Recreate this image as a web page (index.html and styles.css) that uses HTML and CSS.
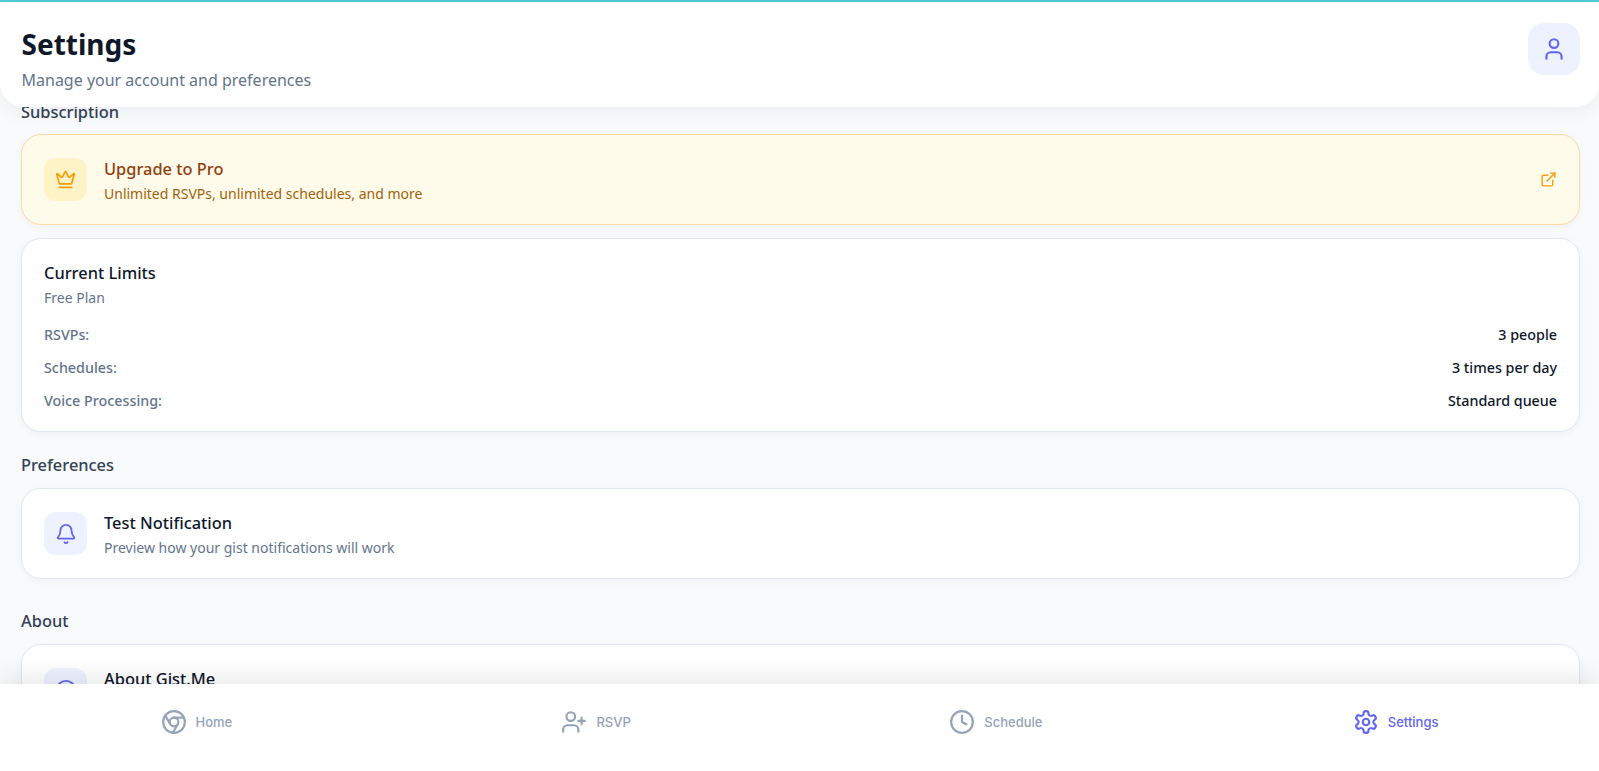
FILE: index.html
```html
<!DOCTYPE html>
<html lang="en">
<head>
<meta charset="utf-8">
<title>Settings</title>
<link rel="stylesheet" href="styles.css">
</head>
<body>
<div class="app">
  <header class="header">
    <div>
      <h1 class="title">Settings</h1>
      <p class="subtitle">Manage your account and preferences</p>
    </div>
    <button class="avatar" aria-label="Profile">
      <svg width="26" height="26" viewBox="0 0 24 24" class="stroke"><path d="M19 21v-2a4 4 0 0 0-4-4H9a4 4 0 0 0-4 4v2"/><circle cx="12" cy="7" r="4"/></svg>
    </button>
  </header>
  <main class="main">
    <h2 class="section-title">Subscription</h2>
    <section class="card card-pro row">
      <div class="icon-box icon-pro">
        <svg width="21" height="21" viewBox="0 0 24 24" class="stroke"><path d="M11.56 3.27a.5.5 0 0 1 .88 0l2.95 5.61a1 1 0 0 0 1.52.29l4.28-3.66a.5.5 0 0 1 .8.52l-2.83 10.25a1 1 0 0 1-.96.72H5.8a1 1 0 0 1-.96-.72L2.01 6.03a.5.5 0 0 1 .8-.52l4.28 3.66a1 1 0 0 0 1.52-.29z"/><path d="M5 21h14"/></svg>
      </div>
      <div class="row-text">
        <div class="row-title pro-title">Upgrade to Pro</div>
        <div class="row-sub pro-sub">Unlimited RSVPs, unlimited schedules, and more</div>
      </div>
      <svg class="stroke ext" width="17" height="17" viewBox="0 0 24 24"><path d="M15 3h6v6"/><path d="M10 14 21 3"/><path d="M18 13v6a2 2 0 0 1-2 2H5a2 2 0 0 1-2-2V8a2 2 0 0 1 2-2h6"/></svg>
    </section>
    <section class="card limits">
      <div class="row-title">Current Limits</div>
      <div class="row-sub plan">Free Plan</div>
      <div class="limit"><span>RSVPs:</span><strong>3 people</strong></div>
      <div class="limit"><span>Schedules:</span><strong>3 times per day</strong></div>
      <div class="limit"><span>Voice Processing:</span><strong>Standard queue</strong></div>
    </section>
    <h2 class="section-title second">Preferences</h2>
    <section class="card row">
      <div class="icon-box">
        <svg width="22" height="22" viewBox="0 0 24 24" class="stroke"><path d="M10.27 21a2 2 0 0 0 3.46 0"/><path d="M3.26 15.33A1 1 0 0 0 4 17h16a1 1 0 0 0 .74-1.67C19.41 13.96 18 12.5 18 8A6 6 0 0 0 6 8c0 4.5-1.41 5.96-2.74 7.33"/></svg>
      </div>
      <div class="row-text">
        <div class="row-title">Test Notification</div>
        <div class="row-sub">Preview how your gist notifications will work</div>
      </div>
    </section>
    <h2 class="section-title third">About</h2>
    <section class="card row">
      <div class="icon-box">
        <svg width="22" height="22" viewBox="0 0 24 24" class="stroke"><circle cx="12" cy="12" r="10"/><path d="M12 16v-4"/><path d="M12 8h.01"/></svg>
      </div>
      <div class="row-text solo">
        <div class="row-title">About Gist.Me</div>
      </div>
    </section>
  </main>
  <nav class="nav">
    <a class="nav-item">
      <svg width="26" height="26" viewBox="0 0 24 24" class="stroke"><circle cx="12" cy="12" r="10"/><circle cx="12" cy="12" r="4"/><path d="M21.17 8H12"/><path d="M3.95 6.06 8.54 14"/><path d="M10.88 21.94 15.46 14"/></svg>
      <span>Home</span>
    </a>
    <a class="nav-item">
      <svg width="26" height="26" viewBox="0 0 24 24" class="stroke"><path d="M16 21v-2a4 4 0 0 0-4-4H6a4 4 0 0 0-4 4v2"/><circle cx="9" cy="7" r="4"/><path d="M19 8v6"/><path d="M22 11h-6"/></svg>
      <span>RSVP</span>
    </a>
    <a class="nav-item">
      <svg width="26" height="26" viewBox="0 0 24 24" class="stroke"><circle cx="12" cy="12" r="10"/><path d="M12 6v6l4 2"/></svg>
      <span>Schedule</span>
    </a>
    <a class="nav-item active">
      <svg width="26" height="26" viewBox="0 0 24 24" class="stroke"><path d="M12.22 2h-.44a2 2 0 0 0-2 2v.18a2 2 0 0 1-1 1.73l-.43.25a2 2 0 0 1-2 0l-.15-.08a2 2 0 0 0-2.73.73l-.22.38a2 2 0 0 0 .73 2.73l.15.1a2 2 0 0 1 1 1.72v.51a2 2 0 0 1-1 1.74l-.15.09a2 2 0 0 0-.73 2.73l.22.38a2 2 0 0 0 2.73.73l.15-.08a2 2 0 0 1 2 0l.43.25a2 2 0 0 1 1 1.73V20a2 2 0 0 0 2 2h.44a2 2 0 0 0 2-2v-.18a2 2 0 0 1 1-1.73l.43-.25a2 2 0 0 1 2 0l.15.08a2 2 0 0 0 2.73-.73l.22-.39a2 2 0 0 0-.73-2.73l-.15-.08a2 2 0 0 1-1-1.74v-.5a2 2 0 0 1 1-1.74l.15-.09a2 2 0 0 0 .73-2.73l-.22-.38a2 2 0 0 0-2.73-.73l-.15.08a2 2 0 0 1-2 0l-.43-.25a2 2 0 0 1-1-1.73V4a2 2 0 0 0-2-2z"/><circle cx="12" cy="12" r="3"/></svg>
      <span>Settings</span>
    </a>
  </nav>
</div>
</body>
</html>
```
FILE: styles.css
```css
* { box-sizing: border-box; }
html, body { margin: 0; height: 100%; overflow: hidden; }
body {
  font-family: "Noto Sans", "Open Sans", sans-serif;
  background: #f8fafc;
  color: #0f172a;
}
.stroke {
  fill: none;
  stroke: currentColor;
  stroke-width: 2;
  stroke-linecap: round;
  stroke-linejoin: round;
  flex: none;
}
.app {
  position: relative;
  height: 100vh;
  display: flex;
  flex-direction: column;
  border-top: 2px solid #50cdd5;
}
.header {
  position: absolute;
  top: 0;
  left: 0;
  right: 0;
  z-index: 2;
  height: 105px;
  padding: 21px 19px 0 21.5px;
  display: flex;
  justify-content: space-between;
  align-items: flex-start;
  background: #fff;
  border-radius: 0 0 24px 24px;
  box-shadow: 0 4px 20px rgba(15, 23, 42, 0.06);
}
.title {
  margin: 0;
  font-size: 28px;
  line-height: 42px;
  font-weight: 700;
  color: #0f172a;
}
.subtitle {
  margin: 3px 0 0;
  font-size: 16px;
  line-height: 24px;
  color: #64748b;
}
.avatar {
  width: 52px;
  height: 52px;
  border: 0;
  border-radius: 16px;
  background: #eef2ff;
  color: #6366f1;
  display: flex;
  align-items: center;
  justify-content: center;
  padding: 0;
}
.main {
  flex: 1;
  min-height: 0;
  overflow: hidden;
  padding: 98px 19px 0 21px;
}
.section-title {
  margin: 0 0 10px;
  font-size: 16.4px;
  line-height: 24px;
  font-weight: 500;
  color: #334155;
}
.second { margin: 21px 0 11px; }
.third { margin: 30px 0 11px; }
.card {
  background: #fff;
  border: 1px solid #e2e8f0;
  border-radius: 20px;
  box-shadow: 0 2px 8px rgba(15, 23, 42, 0.04);
  padding: 22px;
}
.row {
  display: flex;
  align-items: center;
  gap: 17px;
  height: 91px;
}
.card-pro {
  background: #fffbeb;
  border-color: #fdd8a5;
  margin-bottom: 13px;
  color: #f59e0b;
}
.icon-box {
  width: 43px;
  height: 43px;
  border-radius: 12px;
  background: #eef2ff;
  color: #6366f1;
  display: flex;
  align-items: center;
  justify-content: center;
  flex: none;
}
.icon-pro { background: #fef3c7; color: #f59e0b; }
.row-text { flex: 1; padding-top: 4px; }
.solo { padding-bottom: 26px; }
.row-title {
  font-size: 16.4px;
  line-height: 24px;
  font-weight: 500;
  color: #0f172a;
}
.row-sub {
  margin-top: 1px;
  font-size: 14px;
  line-height: 24px;
  color: #64748b;
}
.pro-title { color: #92400e; }
.pro-sub { color: #a16207; }
.limits { padding: 22px 22px 14px; }
.plan { margin: 1px 0 8px; }
.limit {
  display: flex;
  justify-content: space-between;
  font-size: 14.3px;
  line-height: 33px;
  color: #64748b;
  font-weight: 500;
}
.limit strong { font-weight: 500; color: #0f172a; }
.nav {
  position: relative;
  z-index: 1;
  height: 87px;
  flex: none;
  display: grid;
  grid-template-columns: repeat(4, 1fr);
  background: #fff;
  box-shadow: 0 -6px 24px rgba(0, 0, 0, 0.09);
  font-family: Inter, sans-serif;
  font-size: 13px;
  font-weight: 500;
  color: #94a3b8;
}
.nav-item {
  display: flex;
  align-items: center;
  justify-content: center;
  gap: 9px;
  padding: 0 7px 12px 0;
}
.active { color: #6366f1; }
```
